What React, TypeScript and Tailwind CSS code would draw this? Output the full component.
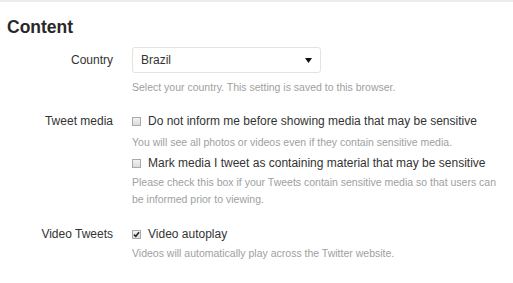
import React from 'react'

const font = { fontFamily: '"Liberation Sans", Arial, sans-serif' }

function Box({ checked = false }: { checked?: boolean }) {
  return (
    <span className="flex h-[9px] w-[9px] shrink-0 items-center justify-center border border-[#a9a9a9] bg-gradient-to-b from-[#f2f2f2] to-[#dcdcdc]">
      {checked && (
        <svg width="7" height="7" viewBox="0 0 7 7">
          <path d="M1 3.6 L2.8 5.4 L6 1.2" fill="none" stroke="#222" strokeWidth="1.6" />
        </svg>
      )}
    </span>
  )
}

function Check({ label, checked }: { label: string; checked?: boolean }) {
  return (
    <label className="flex h-[18px] items-center gap-[7px] text-[12px] leading-[18px] text-[#333]">
      <Box checked={checked} />
      <span>{label}</span>
    </label>
  )
}

function Help({ children, className = '' }: { children: React.ReactNode; className?: string }) {
  return <p className={`text-[10.5px] leading-[17px] text-[#a0a0a0] ${className}`}>{children}</p>
}

function Row({ label, center, children }: { label: string; center?: boolean; children: React.ReactNode }) {
  return (
    <div className="flex gap-[19px]">
      <div className={`w-[113px] shrink-0 text-right text-[12px] leading-[18px] text-[#333] ${center ? 'pt-[4px]' : ''}`}>
        {label}
      </div>
      <div className="flex flex-1 flex-col pr-2">{children}</div>
    </div>
  )
}

export default function App() {
  return (
    <div className="h-[283px] w-[513px] overflow-hidden bg-white" style={font}>
      <div className="h-[2px] bg-[#ececec]" />
      <h2 className="mt-[15px] pl-[7px] text-[17.5px] font-bold leading-[20px] text-[#292929]">Content</h2>

      <div className="mt-[10px] flex flex-col">
        <Row label="Country" center>
          <div className="flex h-[26px] w-[189px] items-center justify-between rounded-[3px] border border-[#e3e3e3] bg-white pl-[8px] pr-[8px] text-[12px] text-[#333]">
            <span>Brazil</span>
            <svg width="7" height="5" viewBox="0 0 7 5">
              <path d="M0 0 H7 L3.5 5 Z" fill="#111" />
            </svg>
          </div>
          <Help className="mt-[6px]">Select your country. This setting is saved to this browser.</Help>
        </Row>

        <div className="mt-[16px]">
          <Row label="Tweet media">
            <Check label="Do not inform me before showing media that may be sensitive" />
            <Help className="mt-[4px]">You will see all photos or videos even if they contain sensitive media.</Help>
            <div className="mt-[3px]">
              <Check label="Mark media I tweet as containing material that may be sensitive" />
            </div>
            <Help className="mt-[2px]">
              Please check this box if your Tweets contain sensitive media so that users can be informed prior to viewing.
            </Help>
          </Row>
        </div>

        <div className="mt-[17px]">
          <Row label="Video Tweets">
            <Check label="Video autoplay" checked />
            <Help className="mt-[2px]">Videos will automatically play across the Twitter website.</Help>
          </Row>
        </div>
      </div>
    </div>
  )
}
